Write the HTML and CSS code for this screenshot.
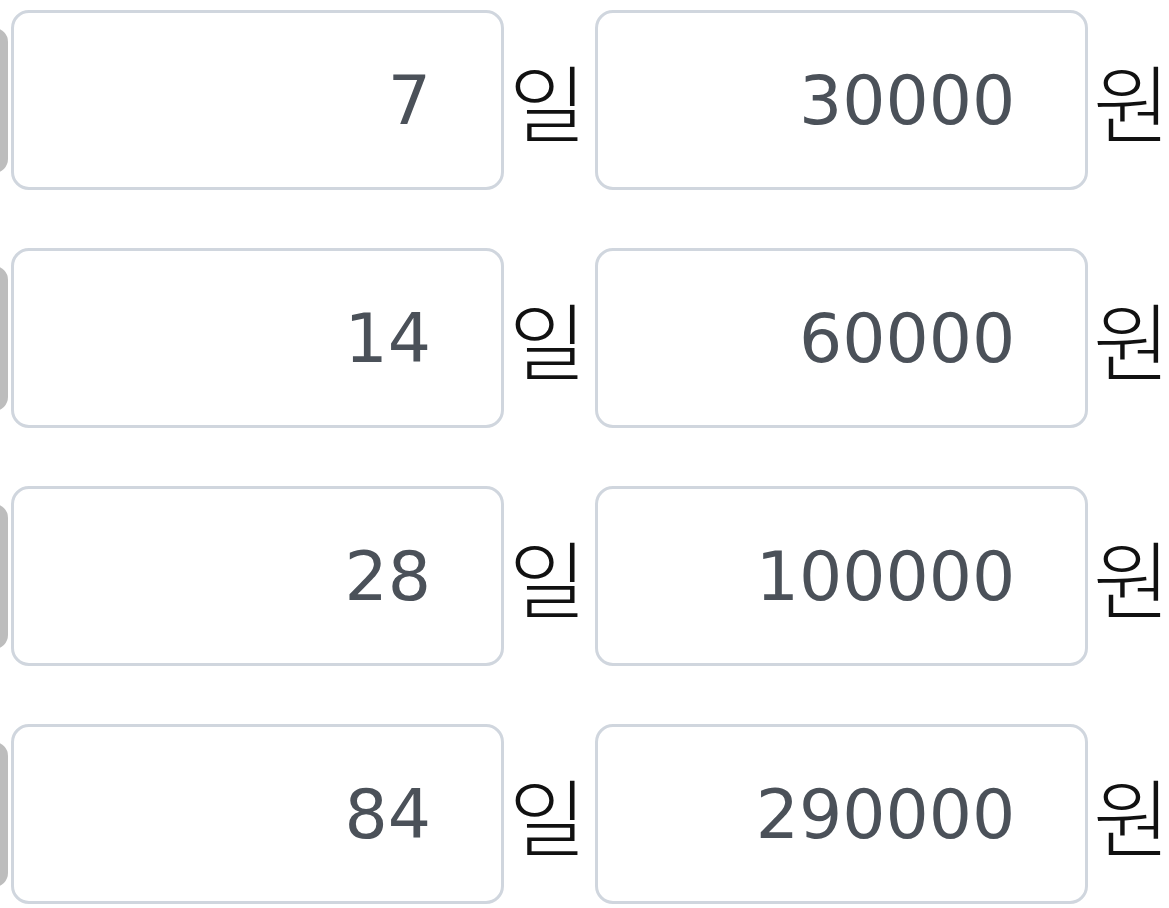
FILE: index.html
```html
<!DOCTYPE html>
<html lang="ko">
<head>
    <meta charset="UTF-8">
    <title>기간별 요금</title>
    <link rel="stylesheet" href="styles.css">
</head>
<body>
<div class="price-list">
    <div class="price-row">
        <div class="grip"></div>
        <input class="field" type="text" name="days[]" value="7">
        <span class="unit">일</span>
        <input class="field" type="text" name="price[]" value="30000">
        <span class="unit">원</span>
    </div>
    <div class="price-row">
        <div class="grip"></div>
        <input class="field" type="text" name="days[]" value="14">
        <span class="unit">일</span>
        <input class="field" type="text" name="price[]" value="60000">
        <span class="unit">원</span>
    </div>
    <div class="price-row">
        <div class="grip"></div>
        <input class="field" type="text" name="days[]" value="28">
        <span class="unit">일</span>
        <input class="field" type="text" name="price[]" value="100000">
        <span class="unit">원</span>
    </div>
    <div class="price-row">
        <div class="grip"></div>
        <input class="field" type="text" name="days[]" value="84">
        <span class="unit">일</span>
        <input class="field" type="text" name="price[]" value="290000">
        <span class="unit">원</span>
    </div>
</div>
</body>
</html>
```

FILE: styles.css
```css
body { margin: 0; background: #fff; overflow: hidden; font-family: "DejaVu Sans", Verdana, "Noto Sans CJK KR", sans-serif; }
.price-list { display: flex; flex-direction: column; gap: 58px; padding-top: 10px; }
.price-row { display: flex; align-items: center; height: 180px; white-space: nowrap; }
.grip { flex: none; width: 30px; height: 145px; margin-left: -22px; margin-right: 3px; background: #bdbdbd; border-radius: 14px; }
.field { flex: none; box-sizing: border-box; width: 493px; height: 180px; margin: 0; padding: 0 70px 0 0; border: 3px solid #d0d6de; border-radius: 18px; background: #fff; color: #4b5159; font-family: "DejaVu Sans", Verdana, sans-serif; font-size: 68px; text-align: right; outline: none; }
.unit { flex: none; margin: 0 9px 0 5px; color: #111; font-family: "Noto Sans CJK KR", sans-serif; font-size: 84px; font-weight: 300; line-height: 1; }
```
